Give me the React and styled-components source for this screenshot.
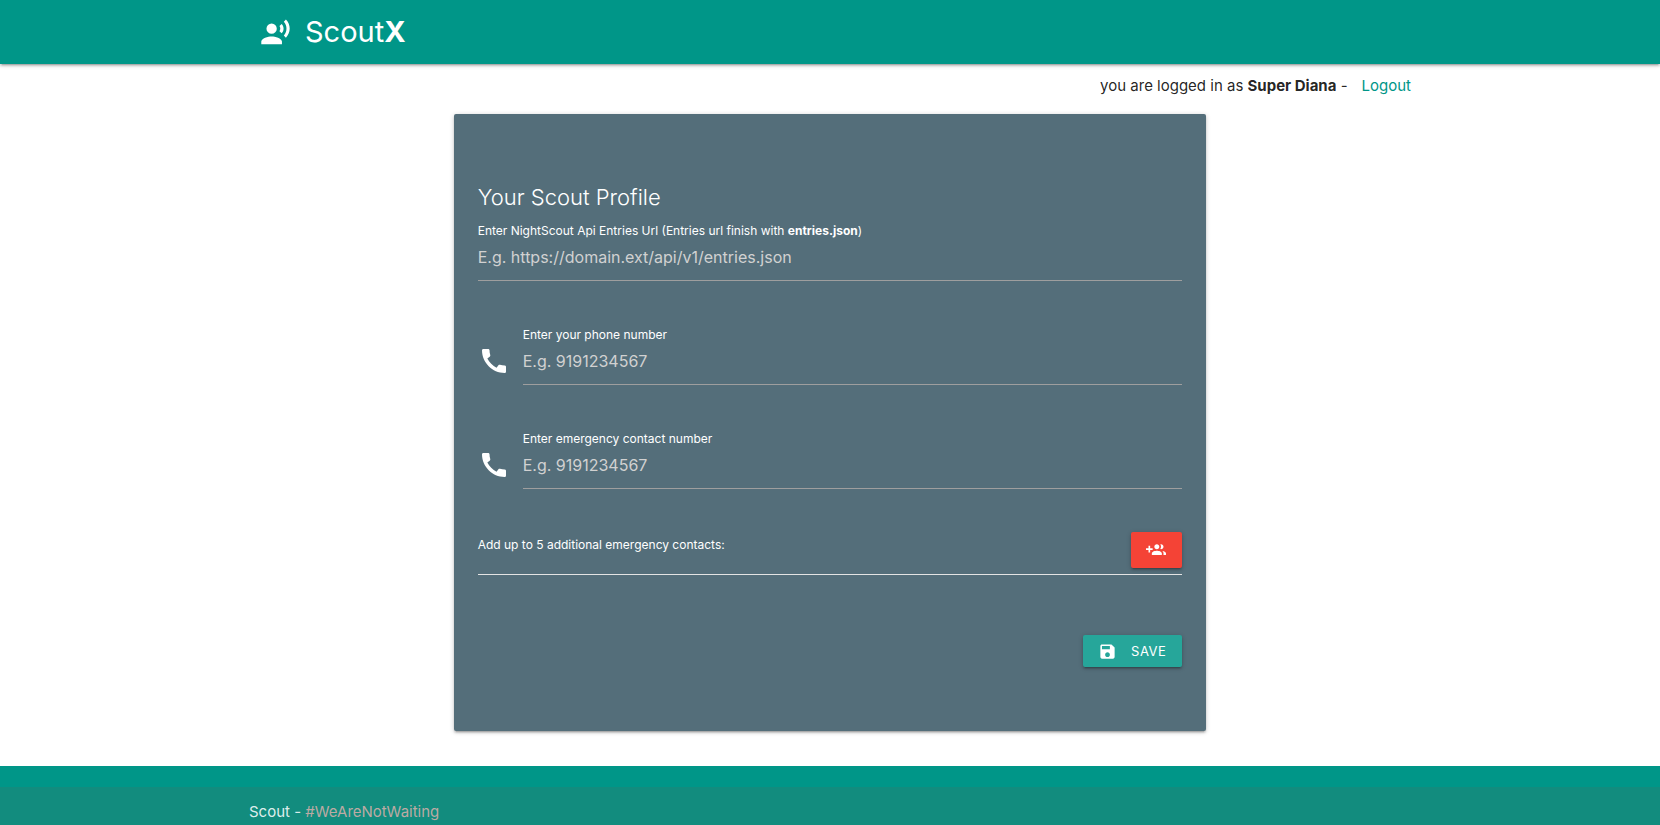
import React from "react";
import styled, { createGlobalStyle } from "styled-components";

const GlobalStyle = createGlobalStyle`
  *, *::before, *::after { box-sizing: border-box; }
  html { scrollbar-width: none; }
  body {
    margin: 0;
    background: #fff;
    color: rgba(0, 0, 0, 0.87);
    font-family: Inter, "Liberation Sans", sans-serif;
    font-size: 15px;
    line-height: 24px;
  }
`;

const Container = styled.div`
  width: 70%;
  margin: 0 auto;
`;

const NavBar = styled.header`
  position: relative;
  background: #009688;
  box-shadow: 0 2px 2px 0 rgba(0, 0, 0, 0.14), 0 3px 1px -2px rgba(0, 0, 0, 0.12),
    0 1px 5px 0 rgba(0, 0, 0, 0.2);
`;

const Brand = styled.a`
  display: inline-flex;
  align-items: center;
  gap: 14px;
  height: 64px;
  padding-left: 11px;
  color: #fff;
  font-size: 29px;
  text-decoration: none;
  vertical-align: top;
`;

const Icon = styled.svg`
  display: block;
  flex: none;
  width: ${(p) => p.$size}px;
  height: ${(p) => p.$size}px;
  fill: currentColor;
`;

const UserBar = styled.div`
  display: flex;
  justify-content: flex-end;
  gap: 14px;
  padding: 10px 0 16px;
`;

const LogoutLink = styled.a`
  color: #009688;
  text-decoration: none;
`;

const Card = styled.main`
  width: calc(66.6667% - 22px);
  margin: 0 auto 35px;
  padding: 67px 24px 64px;
  border-radius: 2px;
  background: #546e7a;
  color: #fff;
  box-shadow: 0 2px 2px 0 rgba(0, 0, 0, 0.14), 0 3px 1px -2px rgba(0, 0, 0, 0.12),
    0 1px 5px 0 rgba(0, 0, 0, 0.2);
`;

const Title = styled.h1`
  margin: 0 0 11px;
  font-size: 22px;
  font-weight: 300;
  line-height: 32px;
`;

const Fields = styled.div`
  display: grid;
  gap: 47px;
  margin-bottom: 43px;
`;

const FieldRow = styled.div`
  display: flex;
  align-items: flex-end;
  gap: 13px;
`;

const FieldIcon = styled.span`
  padding-bottom: 8px;
`;

const FieldBody = styled.div`
  flex: 1;
  min-width: 0;
`;

const Label = styled.label`
  display: block;
  font-size: 12px;
  line-height: 14px;
`;

const Input = styled.input`
  display: block;
  width: 100%;
  height: 43px;
  padding: 0 0 4px;
  border: 0;
  border-bottom: 1px solid #9e9e9e;
  border-radius: 0;
  outline: none;
  background: transparent;
  color: #fff;
  font: inherit;
  font-size: 16px;
  &::placeholder { color: #d1d1d1; opacity: 1; }
  &:focus { border-bottom-color: #26a69a; }
`;

const ContactsRow = styled.div`
  display: flex;
  align-items: flex-start;
  justify-content: space-between;
  margin-bottom: 60px;
  padding-bottom: 6px;
  border-bottom: 1px solid #e4e4e4;
`;

const ContactsText = styled.p`
  margin: 5px 0 0;
  font-size: 12px;
  line-height: 16px;
`;

const Button = styled.button`
  display: inline-flex;
  align-items: center;
  justify-content: center;
  gap: 14px;
  height: ${(p) => (p.$danger ? 36 : 32)}px;
  padding: 0 16px 0 15px;
  border: 0;
  border-radius: 2px;
  background: ${(p) => (p.$danger ? "#f44336" : "#26a69a")};
  color: #fff;
  font: inherit;
  font-size: 13px;
  letter-spacing: 0.5px;
  text-transform: uppercase;
  cursor: pointer;
  box-shadow: 0 2px 2px 0 rgba(0, 0, 0, 0.14), 0 3px 1px -2px rgba(0, 0, 0, 0.12),
    0 1px 5px 0 rgba(0, 0, 0, 0.2);
`;

const Actions = styled.div`
  display: flex;
  justify-content: flex-end;
`;

const Footer = styled.footer`
  padding-top: 21px;
  background: #009688;
`;

const Copyright = styled.div`
  padding: 10px 0;
  background: #128c7e;
  color: rgba(255, 255, 255, 0.87);
  line-height: 30px;
`;

const TagLink = styled.a`
  color: #bcaaa4;
  text-decoration: none;
`;

const paths = {
  voice:
    "M9 5a4 4 0 1 0 0 8 4 4 0 0 0 0-8zM9 15c-2.67 0-8 1.34-8 4v2h16v-2c0-2.66-5.33-4-8-4zm7.76-9.64l-1.68 1.69c.84 1.18.84 2.71 0 3.89l1.68 1.69c2.02-2.02 2.02-5.07 0-7.27zM20.07 2l-1.63 1.63c2.77 3.02 2.77 7.56 0 10.74L20.07 16c3.9-3.89 3.91-9.95 0-14z",
  phone:
    "M20.01 15.38c-1.23 0-2.42-.2-3.53-.56-.35-.12-.74-.03-1.01.24l-1.57 1.97c-2.83-1.35-5.48-3.9-6.89-6.83l1.95-1.66c.27-.28.35-.67.24-1.02-.37-1.11-.56-2.3-.56-3.53 0-.54-.45-.99-.99-.99H4.19C3.65 3 3 3.24 3 3.99 3 13.28 10.73 21 20.01 21c.71 0 .99-.63.99-1.18v-3.45c0-.54-.45-.99-.99-.99z",
  groupAdd:
    "M8 10H5V7H3v3H0v2h3v3h2v-3h3v-2zm10 1c1.66 0 2.99-1.34 2.99-3S19.66 5 18 5c-.32 0-.63.05-.91.14.57.81.9 1.79.9 2.86s-.34 2.04-.9 2.86c.28.09.59.14.91.14zm-5 0c1.66 0 2.99-1.34 2.99-3S14.66 5 13 5c-1.66 0-3 1.34-3 3s1.34 3 3 3zm6.62 2.16c.83.73 1.38 1.66 1.38 2.84v2h3v-2c0-1.54-2.37-2.49-4.38-2.84zM13 13c-2 0-6 1-6 3v2h12v-2c0-2-4-3-6-3z",
  save:
    "M17 3H5c-1.11 0-2 .9-2 2v14c0 1.1.89 2 2 2h14c1.1 0 2-.9 2-2V7l-4-4zm-5 16c-1.66 0-3-1.34-3-3s1.34-3 3-3 3 1.34 3 3-1.34 3-3 3zm3-10H5V5h10v4z",
};

function Glyph({ name, size }) {
  return (
    <Icon $size={size} viewBox="0 0 24 24" aria-hidden="true">
      <path d={paths[name]} />
    </Icon>
  );
}

function Field({ id, label, icon, ...inputProps }) {
  return (
    <FieldRow>
      {icon && (
        <FieldIcon>
          <Glyph name={icon} size={32} />
        </FieldIcon>
      )}
      <FieldBody>
        <Label htmlFor={id}>{label}</Label>
        <Input id={id} {...inputProps} />
      </FieldBody>
    </FieldRow>
  );
}

export default function App() {
  return (
    <>
      <GlobalStyle />
      <NavBar>
        <Container>
          <Brand href="#">
            <Glyph name="voice" size={31} />
            <span>Scout<b>X</b></span>
          </Brand>
        </Container>
      </NavBar>
      <Container>
        <UserBar>
          <span>you are logged in as <b>Super Diana</b> -</span>
          <LogoutLink href="#logout">Logout</LogoutLink>
        </UserBar>
        <Card>
          <form onSubmit={(e) => e.preventDefault()}>
            <Title>Your Scout Profile</Title>
            <Fields>
              <Field
                id="entries-url"
                type="url"
                label={<>Enter NightScout Api Entries Url (Entries url finish with <b>entries.json</b>)</>}
                placeholder="E.g. https://domain.ext/api/v1/entries.json"
              />
              <Field id="phone" type="tel" icon="phone" label="Enter your phone number" placeholder="E.g. 9191234567" />
              <Field id="emergency" type="tel" icon="phone" label="Enter emergency contact number" placeholder="E.g. 9191234567" />
            </Fields>
            <ContactsRow>
              <ContactsText>Add up to 5 additional emergency contacts:</ContactsText>
              <Button type="button" $danger aria-label="Add emergency contact">
                <Glyph name="groupAdd" size={20} />
              </Button>
            </ContactsRow>
            <Actions>
              <Button type="submit">
                <Glyph name="save" size={19} />
                Save
              </Button>
            </Actions>
          </form>
        </Card>
      </Container>
      <Footer>
        <Copyright>
          <Container>
            Scout - <TagLink href="#wearenotwaiting">#WeAreNotWaiting</TagLink>
          </Container>
        </Copyright>
      </Footer>
    </>
  );
}
